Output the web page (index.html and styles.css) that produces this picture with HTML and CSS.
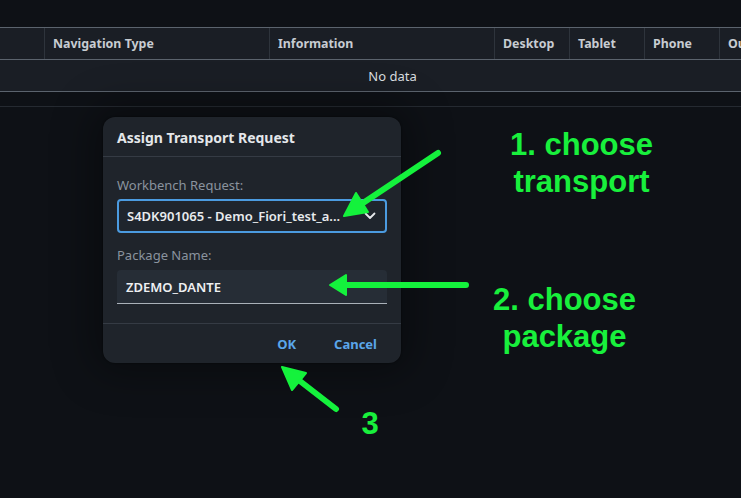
FILE: index.html
```html
<!DOCTYPE html>
<html>
<head>
<meta charset="utf-8">
<link rel="stylesheet" href="styles.css">
</head>
<body>
<div class="page">
  <div class="topgap"></div>
  <div class="table">
    <div class="row head">
      <div class="cell c0"></div>
      <div class="cell c1">Navigation Type</div>
      <div class="cell c2">Information</div>
      <div class="cell c3">Desktop</div>
      <div class="cell c3">Tablet</div>
      <div class="cell c3">Phone</div>
      <div class="cell c3 last">Ou</div>
    </div>
    <div class="row nodata">No data</div>
  </div>
  <div class="strip"></div>
  <div class="stage">
    <div class="dialog">
      <div class="dlg-title">Assign Transport Request</div>
      <div class="dlg-body">
        <label class="lbl">Workbench Request:</label>
        <div class="select">
          <span class="sel-text">S4DK901065 - Demo_Fiori_test_a...</span>
          <svg class="chev" width="12" height="8" viewBox="0 0 12 8"><path d="M1.5 1.5 L6 6 L10.5 1.5" fill="none" stroke="#e6e9ec" stroke-width="1.8" stroke-linecap="round" stroke-linejoin="round"/></svg>
        </div>
        <label class="lbl lbl2">Package Name:</label>
        <div class="input">ZDEMO_DANTE</div>
      </div>
      <div class="dlg-foot">
        <button class="btn">OK</button>
        <button class="btn">Cancel</button>
      </div>
    </div>
  </div>
  <div class="note n1">1. choose<br>transport</div>
  <div class="note n2">2. choose<br>package</div>
  <div class="note n3">3</div>
  <svg class="arrows" width="741" height="498" viewBox="0 0 741 498">
    <g stroke="#14f23c" stroke-width="6" stroke-linecap="round" fill="#14f23c">
      <line x1="438" y1="153" x2="360" y2="205"/>
      <polygon points="344,216 356,193 368,212" stroke-width="2" stroke-linejoin="round"/>
      <line x1="466" y1="285" x2="345" y2="285"/>
      <polygon points="330,285 346,275 346,295" stroke-width="2" stroke-linejoin="round"/>
      <line x1="336" y1="409" x2="296" y2="378"/>
      <polygon points="282,367 306,373 292,390" stroke-width="2" stroke-linejoin="round"/>
    </g>
  </svg>
</div>
</body>
</html>
```

FILE: styles.css
```css
* { box-sizing: border-box; }
html, body { margin: 0; padding: 0; }
body {
  background: #0e1116;
  font-family: "Noto Sans", "Open Sans", sans-serif;
  width: 741px;
  height: 498px;
  overflow: hidden;
}
.page {
  position: relative;
  width: 741px;
  height: 498px;
  overflow: hidden;
  background: #0e1116;
}
.topgap { height: 27px; }
.table {
  background: #1a1e25;
  border-top: 1px solid #5b636d;
}
.row {
  display: flex;
  height: 32px;
  border-bottom: 1px solid #5b636d;
}
.head { overflow: hidden; }
.head .cell {
  font-size: 12.4px;
  font-weight: 700;
  color: #c7ccd2;
  padding-left: 8px;
  display: flex;
  align-items: center;
  border-right: 1px solid #2e343c;
  flex: none;
  white-space: nowrap;
  overflow: hidden;
}
.c0 { width: 45px; }
.c1 { width: 225px; }
.c2 { width: 225px; }
.c3 { width: 75px; }
.head .last { border-right: none; width: 22px; }
.nodata {
  justify-content: center;
  align-items: center;
  font-size: 13px;
  color: #d6dade;
  padding-left: 44px;
}
.strip {
  height: 15px;
  border-bottom: 1px solid #252a31;
}
.stage {
  padding-left: 103px;
  padding-top: 10px;
}
.dialog {
  width: 298px;
  background: #1f242b;
  border-radius: 12px;
  box-shadow: 0 0 40px 10px rgba(0,0,0,0.35), 0 0 2px rgba(0,0,0,0.6);
}
.dlg-title {
  height: 40px;
  padding: 11px 14px 0;
  font-size: 14px;
  font-weight: 700;
  color: #e4e7ea;
  border-bottom: 1px solid #353b44;
}
.dlg-body {
  padding: 19px 14px 19px;
  display: flex;
  flex-direction: column;
}
.lbl {
  font-size: 13px;
  color: #8a939e;
  line-height: 18px;
}
.select {
  margin-top: 5px;
  height: 34px;
  border: 2px solid #4b9be0;
  border-radius: 4px;
  background: #1f252d;
  display: flex;
  align-items: center;
  padding: 0 8px 0 8px;
}
.sel-text {
  flex: 1;
  font-size: 13px;
  font-weight: 600;
  color: #e8ebee;
}
.chev { margin-right: 1px; }
.lbl2 { margin-top: 13px; }
.input {
  margin-top: 6px;
  height: 34px;
  background: #262d36;
  border-bottom: 1px solid #aab1b9;
  border-radius: 4px 4px 0 0;
  font-size: 13px;
  font-weight: 600;
  color: #eef0f2;
  padding: 8px 9px 0;
}
.dlg-foot {
  border-top: 1px solid #353b44;
  height: 40px;
  display: flex;
  justify-content: flex-end;
  align-items: center;
  gap: 38px;
  padding-right: 24px;
}
.btn {
  background: none;
  border: none;
  padding: 0;
  font-family: inherit;
  font-size: 13px;
  font-weight: 700;
  color: #5aa6ea;
}
.note {
  position: absolute;
  font-family: "Liberation Sans", Arial, sans-serif;
  font-weight: 700;
  font-size: 31px;
  line-height: 37px;
  color: #18f03c;
  text-align: center;
}
.n1 { left: 504px; top: 126px; width: 155px; }
.n2 { left: 487px; top: 281px; width: 155px; }
.n3 { left: 355px; top: 405px; width: 30px; }
.arrows {
  position: absolute;
  left: 0;
  top: 0;
  pointer-events: none;
}
```
